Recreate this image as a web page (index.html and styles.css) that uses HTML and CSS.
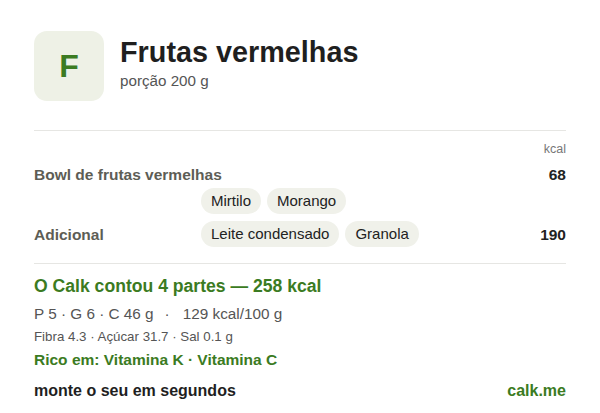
FILE: index.html
```html
<!DOCTYPE html>
<html lang="pt">
<head>
  <meta charset="UTF-8">
  <title>Frutas vermelhas</title>
  <link rel="stylesheet" href="styles.css">
</head>
<body>
<div class="card">

  <div class="head">
    <div class="logo">F</div>
    <div>
      <h1>Frutas vermelhas</h1>
      <div class="portion">porção 200 g</div>
    </div>
  </div>

  <hr class="line">

  <div class="unit">kcal</div>

  <div class="rows">
    <div class="name wide">Bowl de frutas vermelhas</div>
    <div class="kcal">68</div>
    <div class="chips">
      <span class="chip">Mirtilo</span>
      <span class="chip">Morango</span>
    </div>

    <div class="name">Adicional</div>
    <div class="chips">
      <span class="chip">Leite condensado</span>
      <span class="chip">Granola</span>
    </div>
    <div class="kcal">190</div>
  </div>

  <hr class="line line2">

  <div class="total">O Calk contou 4 partes — 258 kcal</div>
  <div class="macros">
    <span>P 5 · G 6 · C 46 g</span>
    <span>·</span>
    <span>129 kcal/100 g</span>
  </div>
  <div class="extra">Fibra 4.3 · Açúcar 31.7 · Sal 0.1 g</div>
  <div class="rich">Rico em: Vitamina K · Vitamina C</div>

  <div class="foot">
    <span>monte o seu em segundos</span>
    <span class="site">calk.me</span>
  </div>

</div>
</body>
</html>
```

FILE: styles.css
```css
body {
  margin: 0;
  font-family: "Liberation Sans", Arial, sans-serif;
  background-color: #ffffff;
  color: #222;
}
.card {
  padding: 31px 34px 0 34px;
}
.head {
  display: flex;
  align-items: flex-start;
  gap: 16px;
}
.logo {
  width: 70px;
  height: 70px;
  border-radius: 13px;
  background: #eef1e6;
  color: #3b7b22;
  font-weight: bold;
  font-size: 32px;
  display: flex;
  justify-content: center;
  align-items: center;
  flex-shrink: 0;
}
h1 {
  margin: 4px 0 0 0;
  font-size: 28.8px;
  line-height: 34px;
  color: #1f1f1f;
}
.portion {
  margin-top: 3px;
  font-size: 15.2px;
  color: #555;
}
.line {
  border: none;
  border-top: 1px solid #e6e6e3;
  margin: 29px 0 0 0;
}
.unit {
  text-align: right;
  font-size: 12.5px;
  line-height: 16px;
  color: #777;
  margin-top: 10px;
}
.rows {
  display: grid;
  grid-template-columns: 167px 1fr auto;
  align-items: center;
  margin-top: 8px;
}
.name {
  grid-column: 1;
  font-size: 15.5px;
  font-weight: bold;
  color: #5d5d55;
  line-height: 20px;
}
.wide {
  grid-column: 1 / 3;
}
.kcal {
  grid-column: 3;
  font-size: 15.5px;
  font-weight: bold;
  text-align: right;
  color: #222;
}
.chips {
  grid-column: 2;
  display: flex;
  gap: 6px;
  padding: 3px 0 4px 0;
}
.chip {
  background: #f0f1ea;
  border-radius: 13px;
  padding: 0 10px;
  font-size: 15px;
  line-height: 26px;
  color: #222;
}
.line2 {
  margin-top: 12px;
}
.total {
  margin-top: 11px;
  font-size: 17.6px;
  line-height: 22px;
  font-weight: bold;
  color: #3b7b22;
}
.macros {
  margin-top: 6px;
  display: flex;
  gap: 11px;
  font-size: 15.3px;
  line-height: 22px;
  color: #555;
}
.macros span:nth-child(3) {
  margin-left: 2px;
}
.extra {
  margin-top: 3px;
  font-size: 13.3px;
  line-height: 18px;
  color: #555;
}
.rich {
  margin-top: 4px;
  font-size: 15.5px;
  line-height: 20px;
  font-weight: bold;
  color: #3b7b22;
}
.foot {
  margin-top: 11px;
  display: flex;
  justify-content: space-between;
  font-size: 16px;
  line-height: 20px;
  font-weight: bold;
  color: #1f1f1f;
}
.site {
  color: #3b7b22;
}
```
